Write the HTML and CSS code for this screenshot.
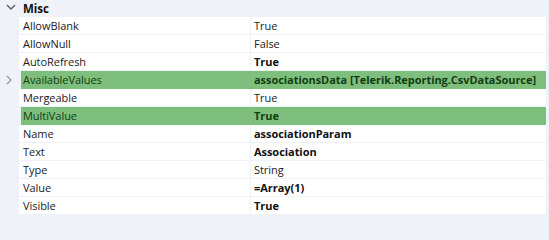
FILE: index.html
```html
<!DOCTYPE html>
<html>
<head>
<meta charset="utf-8">
<link rel="stylesheet" href="styles.css">
</head>
<body>
<div class="grid">
  <div class="header">
    <div class="gutter"><svg class="chev-down" width="10" height="6" viewBox="0 0 10 6"><path d="M1 1 L5 5 L9 1" fill="none" stroke="#5a5a5a" stroke-width="1.3"/></svg></div>
    <div class="cat">Misc</div>
  </div>
  <div class="row"><div class="gutter"></div><div class="cells"><div class="name">AllowBlank</div><div class="value">True</div></div></div>
  <div class="row"><div class="gutter"></div><div class="cells"><div class="name">AllowNull</div><div class="value">False</div></div></div>
  <div class="row"><div class="gutter"></div><div class="cells"><div class="name">AutoRefresh</div><div class="value b">True</div></div></div>
  <div class="row sel"><div class="gutter"><svg class="chev-right" width="6" height="10" viewBox="0 0 6 10"><path d="M1 1 L5 5 L1 9" fill="none" stroke="#9a9a9a" stroke-width="1.3"/></svg></div><div class="cells"><div class="name">AvailableValues</div><div class="value b">associationsData [Telerik.Reporting.CsvDataSource]</div></div></div>
  <div class="row"><div class="gutter"></div><div class="cells"><div class="name">Mergeable</div><div class="value">True</div></div></div>
  <div class="row sel"><div class="gutter"></div><div class="cells"><div class="name">MultiValue</div><div class="value b">True</div></div></div>
  <div class="row"><div class="gutter"></div><div class="cells"><div class="name">Name</div><div class="value b">associationParam</div></div></div>
  <div class="row"><div class="gutter"></div><div class="cells"><div class="name">Text</div><div class="value b">Association</div></div></div>
  <div class="row"><div class="gutter"></div><div class="cells"><div class="name">Type</div><div class="value">String</div></div></div>
  <div class="row"><div class="gutter"></div><div class="cells"><div class="name">Value</div><div class="value b">=Array(1)</div></div></div>
  <div class="row"><div class="gutter"></div><div class="cells"><div class="name">Visible</div><div class="value b">True</div></div></div>
</div>
</body>
</html>
```
FILE: styles.css
```css
html, body {
  margin: 0;
  padding: 0;
  background: #eff2f8;
}
body {
  font-family: "Open Sans", "Noto Sans", sans-serif;
  font-size: 11px;
  letter-spacing: -0.05px;
  color: #1a1a24;
}
.grid {
  display: flex;
  flex-direction: column;
  width: 549px;
}
.header {
  display: flex;
  align-items: center;
  height: 17px;
}
.gutter {
  width: 19px;
  flex: none;
  display: flex;
  align-items: center;
  justify-content: center;
}
.chev-down {
  margin-left: 2px;
  margin-top: -3px;
}
.chev-right {
  margin-left: -2px;
}
.cat {
  font-weight: bold;
  padding-left: 4px;
  color: #111;
  font-size: 11.5px;
}
.row {
  display: flex;
  height: 18px;
}
.cells {
  display: flex;
  flex: none;
  width: 527px;
  background: #fff;
  border-bottom: 1px solid #eef1f7;
  box-sizing: border-box;
}
.name {
  width: 232px;
  flex: none;
  box-sizing: border-box;
  padding-left: 4px;
  border-right: 1px solid #eef1f7;
  line-height: 17px;
  white-space: nowrap;
}
.value {
  padding-left: 3px;
  line-height: 17px;
  white-space: nowrap;
}
.b {
  font-weight: bold;
  color: #111;
}
.sel .cells {
  background: #7fbf7d;
  margin-left: 2px;
  width: 525px;
  color: #123d12;
  border-bottom-color: #7fbf7d;
}
.sel .b {
  color: #123d12;
}
.sel .name {
  width: 230px;
  padding-left: 2px;
  border-right-color: #7fbf7d;
}
```
